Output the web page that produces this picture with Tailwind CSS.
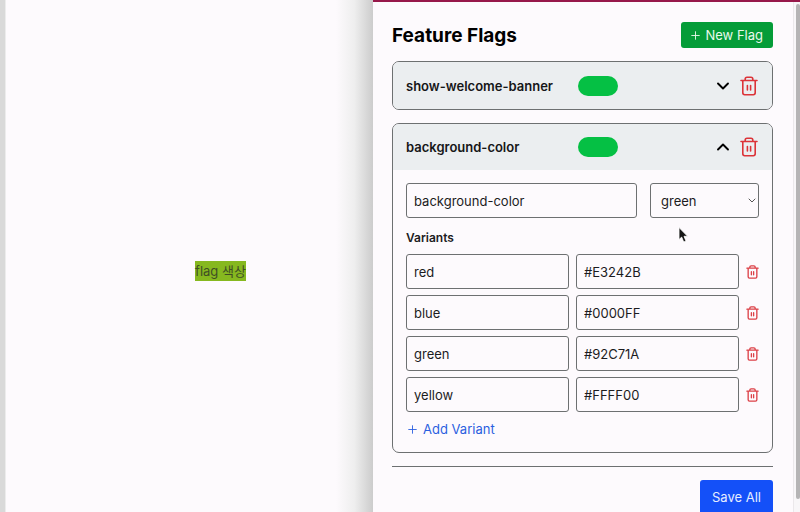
<!DOCTYPE html>
<html lang="ko">
<head>
<meta charset="utf-8">
<meta name="viewport" content="width=device-width, initial-scale=1">
<title>Feature Flags</title>
<script src="https://cdn.jsdelivr.net/npm/@tailwindcss/browser@4"></script>
</head>
<body class="flex h-screen overflow-hidden bg-[#fdfafd] font-[Inter,'Noto_Sans_CJK_KR',sans-serif] text-[13px] leading-5 text-[#1c1c1e]">
<svg class="hidden" aria-hidden="true">
  <symbol id="trash" viewBox="0 0 18 20" fill="none" stroke="currentColor" stroke-linecap="round" stroke-linejoin="round">
    <path d="M1 4.500h16M5.200 4.200V3A1.800 1.800 0 0 1 7 1.200h4A1.800 1.800 0 0 1 12.800 3v1.200M2.800 4.800v12a1.900 1.900 0 0 0 1.900 1.900h8.600a1.900 1.900 0 0 0 1.900-1.900v-12M7.400 9.500v4.500M10.600 9.500v4.500"/>
  </symbol>
  <symbol id="plus" viewBox="0 0 10 10" fill="none" stroke="currentColor" stroke-linecap="round">
    <path d="M5 .8v8.400M.8 5h8.400"/>
  </symbol>
</svg>

<main class="flex min-w-0 flex-1">
  <div class="w-[6px] border-r border-[#ececec] bg-[#d9d9d9]"></div>
  <div class="flex flex-1 items-center justify-center pt-[30px] pl-[99px]">
    <span class="bg-[#86b81f] text-[#3f4f24]">flag 색상</span>
  </div>
  <div class="w-[37px] bg-linear-to-r from-[#fdfafd] via-[#eeeeee] to-[#cccccc]"></div>
</main>

<aside class="flex w-[427px] flex-none flex-col border-t-2 border-[#97184a]">
  <div class="flex min-h-0 flex-1">
    <form class="min-w-0 flex-1 overflow-hidden pt-5 pr-5 pl-[19px]">
      <header class="mb-[13px] flex items-center justify-between">
        <h1 class="pt-[2px] text-[19px] leading-6 font-bold text-black">Feature Flags</h1>
        <button type="button" class="flex h-[26px] items-center gap-[5px] rounded-[3px] bg-[#049c38] px-[10px] text-[#e9f9ec]">
          <svg class="size-[9px]"><use href="#plus"/></svg>New Flag
        </button>
      </header>

      <section class="mb-[13px] overflow-hidden rounded-[7px] border border-[#6d7071]">
        <div class="flex h-[47px] items-center bg-[#ebeef0] pr-[14px] pl-[13px]">
          <h2 class="w-[172px] font-semibold text-[#161618]">show-welcome-banner</h2>
          <input type="checkbox" checked aria-label="show-welcome-banner" class="h-5 w-10 appearance-none rounded-full bg-[#05c044]">
          <button type="button" aria-label="Expand" class="ml-auto text-black">
            <svg class="h-4 w-[14px]" viewBox="0 0 14 16" fill="none" stroke="currentColor" stroke-width="1.900" stroke-linecap="round" stroke-linejoin="round"><path d="M2 5.500l5 5 5-5"/></svg>
          </button>
          <button type="button" aria-label="Delete flag" class="ml-[10px] text-[#dc3338]"><svg class="h-5 w-[18px]" stroke-width="1.600"><use href="#trash"/></svg></button>
        </div>
      </section>

      <section class="overflow-hidden rounded-[7px] border border-[#6d7071]">
        <div class="flex h-[46px] items-center bg-[#ebeef0] pr-[14px] pl-[13px]">
          <h2 class="w-[172px] font-semibold text-[#161618]">background-color</h2>
          <input type="checkbox" checked aria-label="background-color" class="h-5 w-10 appearance-none rounded-full bg-[#05c044]">
          <button type="button" aria-label="Collapse" class="ml-auto text-black">
            <svg class="h-4 w-[14px]" viewBox="0 0 14 16" fill="none" stroke="currentColor" stroke-width="1.900" stroke-linecap="round" stroke-linejoin="round"><path d="M2 10.500l5-5 5 5"/></svg>
          </button>
          <button type="button" aria-label="Delete flag" class="ml-[10px] text-[#dc3338]"><svg class="h-5 w-[18px]" stroke-width="1.600"><use href="#trash"/></svg></button>
        </div>
        <div class="p-[13px]">
          <div class="flex gap-[13px]">
            <input aria-label="Flag name" value="background-color" class="h-[35px] min-w-0 flex-1 rounded-[3px] border border-[#6d7071] px-[7px]">
            <div class="relative w-[109px]">
              <select aria-label="Active variant" class="h-[35px] w-full appearance-none rounded-[3px] border border-[#6d7071] px-[10px]">
                <option>red</option><option>blue</option><option selected>green</option><option>yellow</option>
              </select>
              <svg class="pointer-events-none absolute top-[14px] right-[3px] h-[7px] w-2" viewBox="0 0 8 7" fill="none" stroke="#555" stroke-linecap="round" stroke-linejoin="round"><path d="M1 2l3 3 3-3"/></svg>
              <svg class="pointer-events-none absolute top-[43px] left-7 h-[18px] w-3" viewBox="0 0 12 18"><path d="M1 1.500v12l2.700-2.400 2 4.900 2.300-1-2-4.700h3.600z" fill="#161616" stroke="#fff" stroke-width=".8"/></svg>
            </div>
          </div>
          <h3 class="mt-[10px] mb-[6px] text-[12px] font-semibold">Variants</h3>
          <div class="flex flex-col gap-[6px]">
            <div class="flex items-center gap-[7px]">
              <input aria-label="Variant 1 name" value="red" class="h-[35px] min-w-0 flex-1 rounded-[3px] border border-[#6d7071] px-[7px]">
              <input aria-label="Variant 1 value" value="#E3242B" class="h-[35px] min-w-0 flex-1 rounded-[3px] border border-[#6d7071] px-[7px]">
              <button type="button" aria-label="Delete red" class="text-[#dc4047]"><svg class="h-[14px] w-[13px]" stroke-width="1.900"><use href="#trash"/></svg></button>
            </div>
            <div class="flex items-center gap-[7px]">
              <input aria-label="Variant 2 name" value="blue" class="h-[35px] min-w-0 flex-1 rounded-[3px] border border-[#6d7071] px-[7px]">
              <input aria-label="Variant 2 value" value="#0000FF" class="h-[35px] min-w-0 flex-1 rounded-[3px] border border-[#6d7071] px-[7px]">
              <button type="button" aria-label="Delete blue" class="text-[#dc4047]"><svg class="h-[14px] w-[13px]" stroke-width="1.900"><use href="#trash"/></svg></button>
            </div>
            <div class="flex items-center gap-[7px]">
              <input aria-label="Variant 3 name" value="green" class="h-[35px] min-w-0 flex-1 rounded-[3px] border border-[#6d7071] px-[7px]">
              <input aria-label="Variant 3 value" value="#92C71A" class="h-[35px] min-w-0 flex-1 rounded-[3px] border border-[#6d7071] px-[7px]">
              <button type="button" aria-label="Delete green" class="text-[#dc4047]"><svg class="h-[14px] w-[13px]" stroke-width="1.900"><use href="#trash"/></svg></button>
            </div>
            <div class="flex items-center gap-[7px]">
              <input aria-label="Variant 4 name" value="yellow" class="h-[35px] min-w-0 flex-1 rounded-[3px] border border-[#6d7071] px-[7px]">
              <input aria-label="Variant 4 value" value="#FFFF00" class="h-[35px] min-w-0 flex-1 rounded-[3px] border border-[#6d7071] px-[7px]">
              <button type="button" aria-label="Delete yellow" class="text-[#dc4047]"><svg class="h-[14px] w-[13px]" stroke-width="1.900"><use href="#trash"/></svg></button>
            </div>
          </div>
          <button type="button" class="mt-[7px] ml-[2px] flex items-center gap-[6px] text-[#2b5fe0]">
            <svg class="size-[9px]"><use href="#plus"/></svg>Add Variant
          </button>
        </div>
      </section>

      <footer class="mt-[13px] flex justify-end border-t border-[#6d7071] pt-[13px]">
        <button type="submit" class="h-[34px] rounded-[3px] bg-[#1450f8] px-3 text-[#e6edff]">Save All</button>
      </footer>
    </form>
    <div class="w-[7px] border-l border-[#ebe8eb] bg-[#f8f6f8] pt-[2px] pb-[13px] pl-[2px]">
      <div class="h-full rounded-full bg-[#b5b4b5]"></div>
    </div>
  </div>
</aside>
</body>
</html>
